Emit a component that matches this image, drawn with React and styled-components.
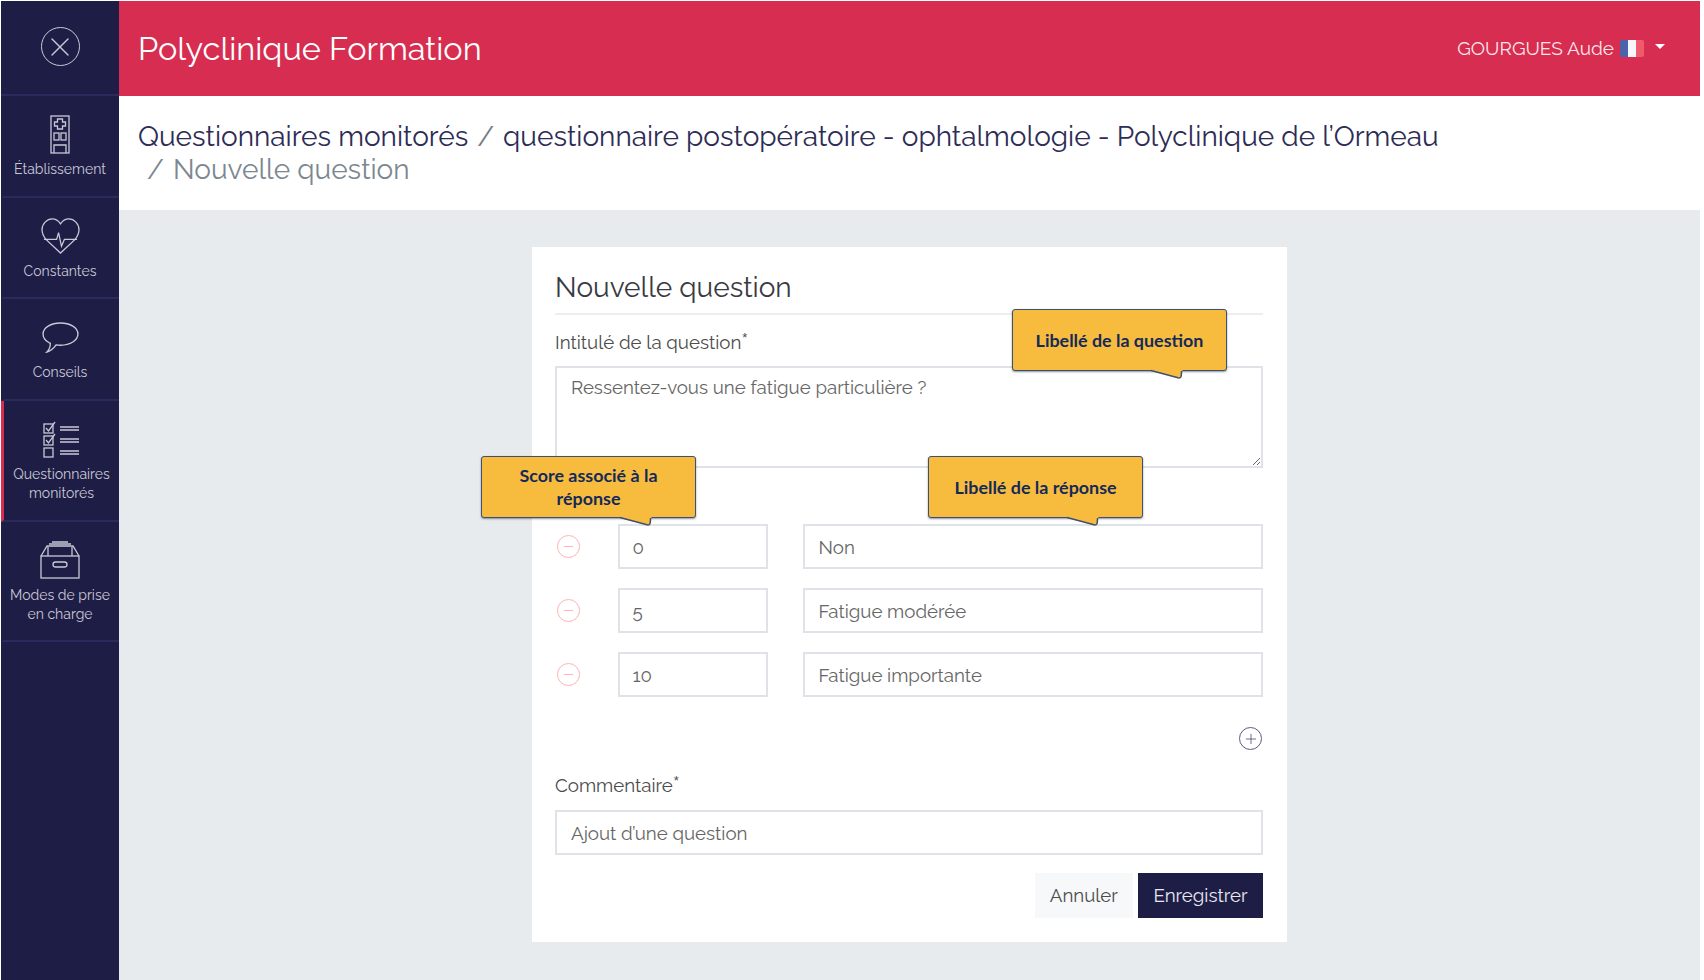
import React from 'react';
import styled, { createGlobalStyle } from 'styled-components';
import { X, Minus, Plus } from 'lucide-react';

const FONT = '"Raleway", "Lato", "Open Sans", "Liberation Sans", sans-serif';

const EtablissementIcon = () => (
    <svg width="20" height="39" viewBox="0 0 20 39" fill="none" stroke="#c9c8d6" strokeWidth="1.3">
        <rect x="1" y="1" width="18" height="37" />
        <path d="M7.500 4h5v3h3v4h-3v3h-5v-3h-3V7h3z" />
        <rect x="4" y="18" width="5" height="7" />
        <rect x="11" y="18" width="5" height="7" />
        <path d="M4 38v-8h12v8" />
    </svg>
);

const ConstantesIcon = () => (
    <svg width="39" height="36" viewBox="0 0 40 37" fill="none" stroke="#c9c8d6" strokeWidth="1.3">
        <path d="M5 22C2 18 1 15 1 12 1 6 6 1 11.500 1 15 1 18 3 20 6 22 3 25 1 28.500 1 34 1 39 6 39 12c0 3-1 6-4 10L20 36z" />
        <path d="M3 22h13l2-7 3 14 3-7h13" />
    </svg>
);

const ConseilsIcon = () => (
    <svg width="37" height="31" viewBox="0 0 38 32" fill="none" stroke="#c9c8d6" strokeWidth="1.4">
        <path d="M19 1c10 0 18 5 18 11.500S29 24 19 24c-1.500 0-3-.1-4.500-.4C12 27 9 30 5 31c2-2 3.500-5 3.500-9C4 20 1 17 1 12.500 1 6 9 1 19 1z" />
    </svg>
);

const QuestionnairesIcon = () => (
    <svg width="38" height="37" viewBox="0 0 38 37" fill="none" stroke="#c9c8d6" strokeWidth="1.3">
        <rect x="1" y="3" width="9" height="9" />
        <path d="M3 7l2.500 3L12 1" />
        <rect x="1" y="15" width="9" height="9" />
        <path d="M3 19l2.500 3L12 13" />
        <rect x="1" y="27" width="9" height="9" />
        <path d="M17 6h19M17 9h19M17 18h19M17 21h19M17 30h19M17 33h19" />
    </svg>
);

const ModesIcon = () => (
    <svg width="40" height="38" viewBox="0 0 40 38" fill="none" stroke="#c9c8d6" strokeWidth="1.3">
        <rect x="1" y="15" width="38" height="22" />
        <path d="M1 15L7 5h26l6 10" />
        <path d="M8 15V6M32 15V6" />
        <path d="M9 3h22M12 1h16" />
        <rect x="13" y="21" width="14" height="5" rx="2.500" />
    </svg>
);

const CalloutTail = () => (
    <TailDrawing width="36" height="11" viewBox="0 0 36 11">
        <path d="M2 0H33.500L33 7 30 9 2 2z" fill="#f7bc3e" />
        <path d="M2 1.500L29 8.800Q31.800 9.400 32.200 7L32.600 2" fill="none" stroke="#3f4f73" strokeWidth="1.500" />
    </TailDrawing>
);

const NAV_ITEMS = [
    { label: 'Établissement', icon: <EtablissementIcon />, height: 102 },
    { label: 'Constantes', icon: <ConstantesIcon />, height: 101 },
    { label: 'Conseils', icon: <ConseilsIcon />, height: 102 },
    { label: 'Questionnaires monitorés', icon: <QuestionnairesIcon />, height: 121, active: true },
    { label: 'Modes de prise en charge', icon: <ModesIcon />, height: 120 },
];

const ANSWERS = [
    { score: '0', label: 'Non' },
    { score: '5', label: 'Fatigue modérée' },
    { score: '10', label: 'Fatigue importante' },
];

const App = () => {
    return (
        <Page>
            <GlobalStyle />
            <Sidebar>
                <CloseSlot>
                    <CloseButton>
                        <X size={32} strokeWidth={1} />
                    </CloseButton>
                </CloseSlot>
                {NAV_ITEMS.map(item => (
                    <NavItem key={item.label} $height={item.height} $active={item.active}>
                        <NavIcon>{item.icon}</NavIcon>
                        <NavLabel>{item.label}</NavLabel>
                    </NavItem>
                ))}
            </Sidebar>
            <Main>
                <Header>
                    <AppTitle>Polyclinique Formation</AppTitle>
                    <UserMenu>
                        GOURGUES Aude
                        <Flag>
                            <i />
                            <i />
                            <i />
                        </Flag>
                        <Caret />
                    </UserMenu>
                </Header>
                <Breadcrumb>
                    <div>
                        Questionnaires monitorés
                        <Separator>/</Separator>
                        questionnaire postopératoire - ophtalmologie - Polyclinique de l’Ormeau
                    </div>
                    <BreadcrumbCurrent>
                        <CurrentSeparator>/</CurrentSeparator>
                        Nouvelle question
                    </BreadcrumbCurrent>
                </Breadcrumb>
                <Content>
                    <Card>
                        <CardTitle>Nouvelle question</CardTitle>
                        <FieldLabel>
                            Intitulé de la question<sup>*</sup>
                        </FieldLabel>
                        <TextArea defaultValue="Ressentez-vous une fatigue particulière ?" />
                        <Callout $top={62} $left={480}>
                            Libellé de la question
                            <CalloutTail />
                        </Callout>
                        <AnswersBlock>
                            <Callout $top={-68} $left={-74}>
                                Score associé à la réponse
                                <CalloutTail />
                            </Callout>
                            <Callout $top={-68} $left={373}>
                                Libellé de la réponse
                                <CalloutTail />
                            </Callout>
                            {ANSWERS.map(answer => (
                                <AnswerRow key={answer.score}>
                                    <RemoveButton>
                                        <Minus size={15} strokeWidth={1.3} />
                                    </RemoveButton>
                                    <ScoreInput defaultValue={answer.score} />
                                    <Input defaultValue={answer.label} />
                                </AnswerRow>
                            ))}
                        </AnswersBlock>
                        <AddRow>
                            <AddButton>
                                <Plus size={16} strokeWidth={1.2} />
                            </AddButton>
                        </AddRow>
                        <CommentLabel>
                            Commentaire<sup>*</sup>
                        </CommentLabel>
                        <Input defaultValue="Ajout d’une question" />
                        <Actions>
                            <CancelButton>Annuler</CancelButton>
                            <SaveButton>Enregistrer</SaveButton>
                        </Actions>
                    </Card>
                </Content>
            </Main>
        </Page>
    );
};

/*
 * Styled Components
 *
 */

const GlobalStyle = createGlobalStyle`
    html, body {
        margin: 0;
        padding: 0;
        background: #fff;
    }

    * {
        box-sizing: border-box;
    }
`;

const Page = styled.div`
    display: flex;
    width: 1700px;
    height: 980px;
    padding: 1px 0 0 1px;
    font-family: ${FONT};
    overflow: hidden;
`;

const Sidebar = styled.nav`
    flex: 0 0 118px;
    background: #1e1d45;
    color: #c9c8d6;
`;

const CloseSlot = styled.div`
    display: flex;
    align-items: center;
    justify-content: center;
    height: 95px;
    padding-bottom: 2px;
    border-bottom: 2px solid #2c2a5c;
`;

const CloseButton = styled.div`
    display: flex;
    align-items: center;
    justify-content: center;
    width: 39px;
    height: 39px;
    border: 1.3px solid #c9c8d6;
    border-radius: 50%;
`;

const NavItem = styled.div`
    display: flex;
    flex-direction: column;
    align-items: center;
    height: ${props => props.$height}px;
    padding-top: 18px;
    padding-right: ${props => (props.$active ? 0 : 3)}px;
    border-bottom: 2px solid #2c2a5c;
    border-left: 3px solid ${props => (props.$active ? '#d72d50' : 'transparent')};
`;

const NavIcon = styled.div`
    display: flex;
    flex: 0 0 40px;
    align-items: center;
    justify-content: center;
`;

const NavLabel = styled.span`
    margin-top: 6px;
    font-size: 14px;
    line-height: 19px;
    text-align: center;
`;

const Main = styled.div`
    display: flex;
    flex: 1;
    flex-direction: column;
    min-width: 0;
`;

const Header = styled.header`
    display: flex;
    flex: 0 0 95px;
    align-items: center;
    justify-content: space-between;
    padding: 0 34px 0 19px;
    background: #d72d50;
    color: #fff;
`;

const AppTitle = styled.div`
    font-size: 32.500px;
    font-weight: 400;
`;

const UserMenu = styled.div`
    display: flex;
    align-items: center;
    margin-top: -1px;
    font-size: 19px;
    color: #fbe6ea;
`;

const Flag = styled.span`
    display: flex;
    width: 24px;
    height: 17px;
    margin-left: 6px;
    border-radius: 2px;
    overflow: hidden;

    i {
        flex: 1;
    }
    i:nth-child(1) {
        background: #4a63ab;
    }
    i:nth-child(2) {
        background: #f5f7fb;
    }
    i:nth-child(3) {
        background: #ef5a6c;
    }
`;

const Caret = styled.span`
    width: 0;
    height: 0;
    margin: 0 1px 3px 11px;
    border-left: 5px solid transparent;
    border-right: 5px solid transparent;
    border-top: 5px solid #fff;
`;

const Breadcrumb = styled.div`
    flex: 0 0 114px;
    padding: 24px 19px 0;
    background: #fff;
    font-size: 28px;
    line-height: 33px;
    color: #2d2c55;
`;

const Separator = styled.span`
    margin: 0 9px;
    color: #737b85;
`;

const BreadcrumbCurrent = styled.div`
    padding-left: 9px;
    color: #7d8790;
`;

const CurrentSeparator = styled.span`
    margin-right: 9px;
`;

const Content = styled.main`
    flex: 1;
    padding: 37px 0 0 413px;
    background: #e8ebee;
`;

const Card = styled.section`
    position: relative;
    width: 755px;
    height: 695px;
    padding: 23px 24px 0 23px;
    background: #fff;
    color: #4c4c4c;
`;

const CardTitle = styled.h2`
    margin: 0;
    padding-bottom: 7px;
    border-bottom: 2px solid #eceef0;
    font-size: 28px;
    font-weight: 400;
    line-height: 36px;
    color: #3a3a42;
`;

const FieldLabel = styled.div`
    margin-top: 15px;
    font-size: 18.700px;
    line-height: 24px;

    sup {
        margin-left: 1px;
        font-family: "Liberation Sans", sans-serif;
        font-size: 13px;
        line-height: 0;
    }
`;

const CommentLabel = styled(FieldLabel)`
    margin-top: 23px;
    margin-bottom: 13px;
`;

const Field = `
    border: 2px solid #dfe3e8;
    border-radius: 0;
    background: #fff;
    color: #666;
    font-family: ${FONT};
    font-size: 18.700px;
    outline: none;
`;

const TextArea = styled.textarea`
    ${Field};
    display: block;
    width: 100%;
    height: 102px;
    margin-top: 12px;
    padding: 7px 14px;
    line-height: 24px;
`;

const Input = styled.input`
    ${Field};
    display: block;
    width: 100%;
    height: 45px;
    padding: 0 14px;
`;

const ScoreInput = styled(Input)`
    flex: 0 0 150px;
    width: 150px;
    margin-right: 35px;
    padding: 0 13px;
`;

const AnswersBlock = styled.div`
    position: relative;
    margin-top: 56px;
`;

const AnswerRow = styled.div`
    display: flex;
    align-items: center;
    margin-bottom: 19px;
`;

const IconCircle = styled.span`
    display: flex;
    flex: none;
    align-items: center;
    justify-content: center;
    width: 23px;
    height: 23px;
    border-radius: 50%;
`;

const RemoveButton = styled(IconCircle)`
    margin: 0 38px 0 1.500px;
    border: 1.5px solid #fbb6ad;
    color: #f9a79c;
`;

const AddRow = styled.div`
    display: flex;
    justify-content: flex-end;
    margin-top: 30px;
    padding-right: 1px;
`;

const AddButton = styled(IconCircle)`
    border: 1.3px solid #5c5b80;
    color: #4a4970;
`;

const Actions = styled.div`
    display: flex;
    justify-content: flex-end;
    margin-top: 18px;
`;

const ActionButton = styled.button`
    height: 45px;
    padding: 0 15px 2px;
    border: 0;
    border-radius: 0;
    font-family: ${FONT};
    font-size: 18.700px;
`;

const CancelButton = styled(ActionButton)`
    margin-right: 5px;
    background: #f7f8fa;
    color: #4c4c4c;
`;

const SaveButton = styled(ActionButton)`
    padding: 0 15.500px 2px;
    background: #1e1d45;
    color: #e8e8f0;
`;

const Callout = styled.div`
    position: absolute;
    top: ${props => props.$top}px;
    left: ${props => props.$left}px;
    z-index: 2;
    display: flex;
    align-items: center;
    justify-content: center;
    width: 215px;
    height: 62px;
    padding: 0 20px;
    border: 1.5px solid #3f4f73;
    border-radius: 3px;
    background: #f7bc3e;
    box-shadow: 0 1px 2px rgba(30, 40, 70, 0.5);
    color: #14295a;
    font-family: "Lato", "Open Sans", "Liberation Sans", sans-serif;
    font-size: 17.900px;
    font-weight: 700;
    line-height: 23px;
    text-align: center;
`;

const TailDrawing = styled.svg`
    position: absolute;
    left: 136px;
    bottom: -10px;
`;

export default App;
